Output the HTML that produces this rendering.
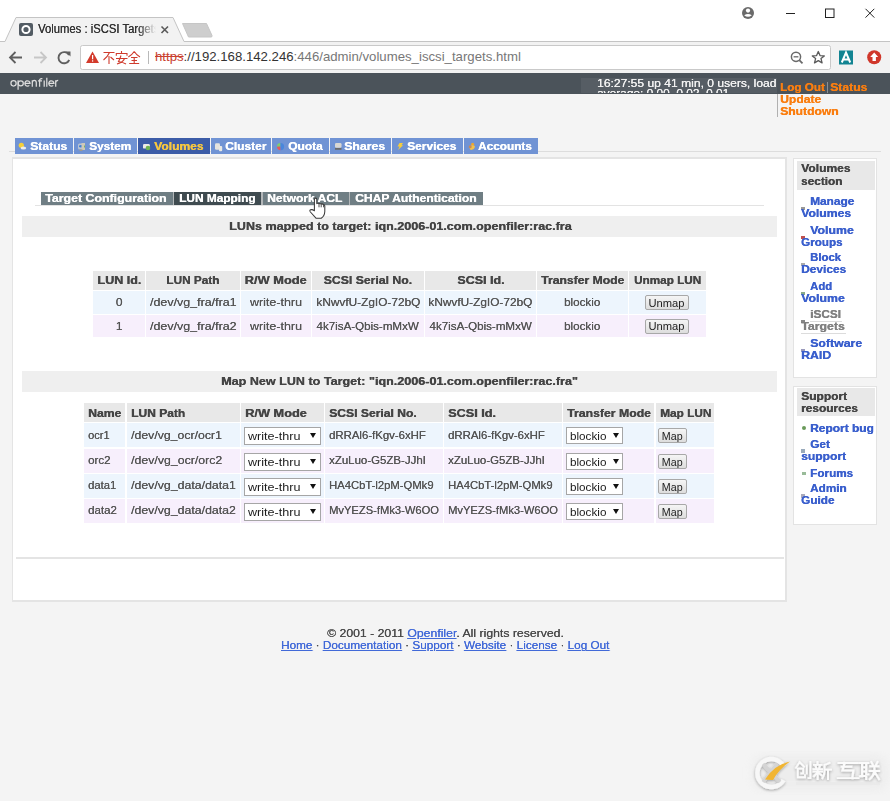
<!DOCTYPE html><html><head><meta charset="utf-8"><style>
*{margin:0;padding:0;box-sizing:border-box}
html,body{width:890px;height:801px;overflow:hidden;background:#f4f4f4;font-family:"Liberation Sans",sans-serif;font-size:11px;color:#444;position:relative}
div,span,svg{position:absolute}
.t{white-space:nowrap;line-height:14px}
.tab{top:138px;height:16px;background:#7093d4}
.tab.act{background:#3c5ca7}
.st{top:192px;height:13px;background:#6f7e84}
.st.act{background:#3f4b50}
.hb{left:22px;width:755px;background:#efefef;height:21px}
.hd{background:#e8e8e8}
.r1{background:#edf5fd}
.r2{background:#f7effc}
.sel{background:#fff;border:1px solid #a6a6a6}
.btn{background:linear-gradient(#f5f5f5,#dddddd);border:1px solid #a8a8a8;border-radius:2px}
.sb{background:#fff;border:1px solid #e3e3e3}
.sh{background:#e8e8e8}
.fl{color:#4169d8;text-decoration:underline}
</style></head><body>
<div style="left:0;top:0;width:890px;height:41px;background:#fff"></div>
<div style="left:0;top:41px;width:890px;height:32px;background:#f2f2f2"></div>
<svg style="left:0;top:0" width="890" height="74">
    <path d="M0 41.5 H5 L16 17.5 H173 L184 41.5 H890" fill="#f2f2f2" stroke="#c4c4c4" stroke-width="1"/>
    <rect x="80.5" y="45.5" width="750" height="24" rx="2" fill="#fff" stroke="#c9c9c9"/>
    <path d="M182.5 23.5 H206.5 L212 35.5 Q212.5 37 211 37 H188.5 Z" fill="#cecece" stroke="#c6c6c6"/>
    <rect x="19" y="23" width="14" height="13" rx="2" fill="#525b63"/>
    <circle cx="26" cy="29.5" r="3.6" fill="none" stroke="#fff" stroke-width="2"/>
    <path d="M161.5 26.5 L168 33 M168 26.5 L161.5 33" stroke="#5a5a5a" stroke-width="1.6"/>
    <path d="M22 57.5 H10 M15.5 52 L10 57.5 L15.5 63" fill="none" stroke="#5f5f5f" stroke-width="1.8"/>
    <path d="M46 57.5 H34 M40.5 52 L46 57.5 L40.5 63" fill="none" stroke="#c7c7c7" stroke-width="1.8"/>
    <path d="M69 55 A5.6 5.6 0 1 0 69.2 60" fill="none" stroke="#5f5f5f" stroke-width="1.9"/>
    <path d="M65.5 51.5 L70.5 51.5 L70.5 56.5 Z" fill="#5f5f5f"/>
    <path d="M92.5 51.5 L99 63 H86 Z" fill="#d33b2c"/>
    <rect x="92" y="55" width="1.2" height="4.3" fill="#fff"/><rect x="92" y="60.3" width="1.2" height="1.3" fill="#fff"/>
    <rect x="148" y="51" width="1" height="13" fill="#b9b9b9"/>
    <circle cx="796" cy="56.8" r="4.6" fill="none" stroke="#6a6a6a" stroke-width="1.5"/>
    <path d="M799.3 60.2 L802.5 63.4" stroke="#6a6a6a" stroke-width="1.8"/>
    <path d="M793.6 56.8 H798.4" stroke="#6a6a6a" stroke-width="1.3"/>
    <path d="M818.3 51.5 L820 55.6 L824.3 55.9 L821 58.6 L822.1 62.9 L818.3 60.6 L814.5 62.9 L815.6 58.6 L812.3 55.9 L816.6 55.6 Z" fill="none" stroke="#5a5a5a" stroke-width="1.3" stroke-linejoin="round"/>
    <rect x="839" y="50.5" width="14" height="14" fill="#128492"/>
    <path d="M841.8 62.5 L846 52.5 L850.2 62.5 M843.4 59.4 H848.6" fill="none" stroke="#fff" stroke-width="2"/>
    <circle cx="874.2" cy="57.3" r="7" fill="#d0372a"/>
    <path d="M874.2 52.5 L878.2 57 H875.9 V61 H872.5 V57 H870.2 Z" fill="#fff"/>
    <circle cx="748" cy="13" r="6" fill="#6a6a6a"/>
    <circle cx="748" cy="10.6" r="2.1" fill="#fff"/>
    <path d="M744.2 15.3 Q748 12.6 751.8 15.3 Q748 18.4 744.2 15.3 Z" fill="#fff"/>
    <rect x="786" y="13" width="9" height="1" fill="#222"/>
    <rect x="825.5" y="9" width="8.5" height="8.5" fill="none" stroke="#222" stroke-width="1"/>
    <path d="M865.5 8.8 L874.3 17.6 M874.3 8.8 L865.5 17.6" stroke="#222" stroke-width="1"/>
    </svg>
<div style="left:38px;top:18px;width:118px;height:20px;overflow:hidden;-webkit-mask-image:linear-gradient(90deg,#000 84%,transparent 100%)"><div class="t" style="left:0px;top:3.94px;color:#333;line-height:14px;text-shadow:0.15px 0 0 currentColor;"><span style="position:static;display:inline-block;white-space:pre;font-size:12px;transform:scaleX(0.9398);transform-origin:0 50%">Volumes : iSCSI Targets</span></div></div>
<svg style="left:103px;top:51px" width="40" height="14"><g fill="none" stroke="#cf3b2d" stroke-width="1.1">
    <path d="M0.5 1.5 H11.5 M6.5 1.5 Q4.5 6 0.5 9 M6 5 V13 M7.5 6 L11 9"/>
    <path transform="translate(12.5,0)" d="M6 0 V2 M0.8 4.8 V2.5 H11.5 V4.8 M0.5 7.5 H12 M5.5 4.5 Q4.5 8 3 10.5 Q8 11.5 10.5 13 M9 7.5 Q8 11 1.5 13"/>
    <path transform="translate(25,0)" d="M6.2 0.5 Q4 4 0.3 6 M6.2 0.5 Q8.5 4 12 6 M3 6.5 H9.5 M3.5 9.5 H9 M1.2 12.5 H11.2 M6.2 6.5 V12.5"/>
    </g></svg>
<div class="t" style="left:155px;top:49px;font-size:13.2px;line-height:16px;color:#777"><span style="position:static;color:#c9402f;text-decoration:line-through">https</span><span style="position:static;color:#333">://192.168.142.246</span>:446/admin/volumes_iscsi_targets.html</div>
<div style="left:0;top:73px;width:890px;height:20.5px;background:#4b535a"></div>
<svg style="left:0;top:74px" width="62" height="18"><g transform="translate(0,-74)" fill="none" stroke="#dcdcdc" stroke-width="1.25">
    <ellipse cx="13.55" cy="83.3" rx="2.6" ry="2.7"/>
    <path d="M18.1 80.2 V89.7"/><circle cx="20.75" cy="83.3" r="2.55"/>
    <path d="M24.9 83.3 H30 A2.55 2.65 0 1 0 29.3 85.3"/>
    <path d="M32.3 80.2 V86.7 M32.3 82.7 A2 2.3 0 0 1 36.3 82.7 V86.7"/>
    <path d="M39.6 86.7 V80.6 Q39.6 78.6 41.6 78.6 H42.4 M38 80.8 H42"/>
    <path d="M44.2 80.6 V86.7 M46.8 77.8 V86.7"/>
    <path d="M48.8 83.3 H53.9 A2.55 2.65 0 1 0 53.2 85.3"/>
    <path d="M55.7 80.2 V86.7 M55.7 82.8 A2.4 2.5 0 0 1 58.2 80.3"/>
    </g><circle cx="44.2" cy="78.8" r="0.75" fill="#dcdcdc"/></svg>
<div style="left:581px;top:78px;width:196px;height:15px;background:#565d64;overflow:hidden"><div class="t" style="left:16px;top:-1.81px;color:#f2f2f2;line-height:14px;text-shadow:0.15px 0 0 currentColor;"><span style="position:static;display:inline-block;white-space:pre;font-size:11px;transform:scaleX(1.0987);transform-origin:0 50%">16:27:55 up 41 min, 0 users, load</span></div><div class="t" style="left:16px;top:7.69px;color:#f2f2f2;line-height:14px;text-shadow:0.15px 0 0 currentColor;"><span style="position:static;display:inline-block;white-space:pre;font-size:11px;transform:scaleX(1.0800);transform-origin:0 50%">average: 0.00, 0.02, 0.01</span></div></div>
<div class="t" style="left:780px;top:79.99px;color:#fa7e10;line-height:14px;text-shadow:0.35px 0 0 currentColor;"><span style="position:static;display:inline-block;white-space:pre;font-size:11px;font-weight:bold;transform:scaleX(1.0603);transform-origin:0 50%">Log Out</span></div>
<div style="left:827px;top:82px;width:1px;height:11px;background:#8b8f93"></div>
<div class="t" style="left:829.8px;top:79.99px;color:#fa7e10;line-height:14px;text-shadow:0.35px 0 0 currentColor;"><span style="position:static;display:inline-block;white-space:pre;font-size:11px;font-weight:bold;transform:scaleX(1.1063);transform-origin:0 50%">Status</span></div>
<div class="t" style="left:780px;top:91.99px;color:#fa7e10;line-height:14px;text-shadow:0.35px 0 0 currentColor;"><span style="position:static;display:inline-block;white-space:pre;font-size:11px;font-weight:bold;transform:scaleX(1.1000);transform-origin:0 50%">Update</span></div>
<div class="t" style="left:780px;top:104.19px;color:#fa7e10;line-height:14px;text-shadow:0.35px 0 0 currentColor;"><span style="position:static;display:inline-block;white-space:pre;font-size:11px;font-weight:bold;transform:scaleX(1.1000);transform-origin:0 50%">Shutdown</span></div>
<div style="left:777px;top:94px;width:1px;height:23px;background:#b0b0b0"></div>
<div style="left:9px;top:151px;width:872px;height:1px;background:#dddddd"></div>
<div class="tab" style="left:15px;width:58px"></div>
<div class="t" style="left:29.5px;top:138.99px;color:#fff;line-height:14px;text-shadow:0.35px 0 0 currentColor;"><span style="position:static;display:inline-block;white-space:pre;font-size:11px;font-weight:bold;transform:scaleX(1.1033);transform-origin:0 50%">Status</span></div>
<div class="tab" style="left:74px;width:63px"></div>
<div class="t" style="left:88.5px;top:138.99px;color:#fff;line-height:14px;text-shadow:0.35px 0 0 currentColor;"><span style="position:static;display:inline-block;white-space:pre;font-size:11px;font-weight:bold;transform:scaleX(1.0756);transform-origin:0 50%">System</span></div>
<div class="tab act" style="left:138px;width:72px"></div>
<div class="t" style="left:153.6px;top:138.99px;color:#f6c740;line-height:14px;text-shadow:0.35px 0 0 currentColor;"><span style="position:static;display:inline-block;white-space:pre;font-size:11px;font-weight:bold;transform:scaleX(1.0970);transform-origin:0 50%">Volumes</span></div>
<div class="tab" style="left:211px;width:60px"></div>
<div class="t" style="left:224.5px;top:138.99px;color:#fff;line-height:14px;text-shadow:0.35px 0 0 currentColor;"><span style="position:static;display:inline-block;white-space:pre;font-size:11px;font-weight:bold;transform:scaleX(1.0895);transform-origin:0 50%">Cluster</span></div>
<div class="tab" style="left:272px;width:57px"></div>
<div class="t" style="left:287.6px;top:138.99px;color:#fff;line-height:14px;text-shadow:0.35px 0 0 currentColor;"><span style="position:static;display:inline-block;white-space:pre;font-size:11px;font-weight:bold;transform:scaleX(1.0887);transform-origin:0 50%">Quota</span></div>
<div class="tab" style="left:330px;width:61px"></div>
<div class="t" style="left:344.3px;top:138.99px;color:#fff;line-height:14px;text-shadow:0.35px 0 0 currentColor;"><span style="position:static;display:inline-block;white-space:pre;font-size:11px;font-weight:bold;transform:scaleX(1.1171);transform-origin:0 50%">Shares</span></div>
<div class="tab" style="left:392px;width:71px"></div>
<div class="t" style="left:406.5px;top:138.99px;color:#fff;line-height:14px;text-shadow:0.35px 0 0 currentColor;"><span style="position:static;display:inline-block;white-space:pre;font-size:11px;font-weight:bold;transform:scaleX(1.0869);transform-origin:0 50%">Services</span></div>
<div class="tab" style="left:464px;width:74px"></div>
<div class="t" style="left:477.8px;top:138.99px;color:#fff;line-height:14px;text-shadow:0.35px 0 0 currentColor;"><span style="position:static;display:inline-block;white-space:pre;font-size:11px;font-weight:bold;transform:scaleX(1.0713);transform-origin:0 50%">Accounts</span></div>
<svg style="left:0;top:136px" width="540" height="20">
    <g transform="translate(0,-136)">
    <circle cx="21.3" cy="145.3" r="2.6" fill="#f5cf3a"/>
    <ellipse cx="23.4" cy="148" rx="2.8" ry="1.6" fill="#ececec"/>
    <rect x="78" y="143.5" width="5.5" height="6" rx="1.5" fill="#b9c3d3"/><ellipse cx="81" cy="146.3" rx="2" ry="1.3" fill="#3d7fd6"/>
    <rect x="81.5" y="143" width="3.5" height="7" fill="#cfc8b8"/><rect x="84" y="145.5" width="1" height="2" fill="#7cb55a"/>
    <rect x="79.5" y="149.5" width="3" height="1.5" fill="#a29a8a"/>
    <rect x="143" y="144" width="6.8" height="4.6" rx="1.2" fill="#ecebe6"/><circle cx="148" cy="148" r="2.3" fill="#6fb54f"/>
    <rect x="215" y="143.2" width="5" height="6.5" rx="1.3" fill="#e4e3de"/><rect x="219" y="146" width="3.2" height="5.2" rx="1" fill="#e8e8e4"/>
    <path d="M280.5 146.6 L280.5 143 A3.6 3.6 0 0 0 277 146.8 Z" fill="#7fcd6e"/>
    <path d="M280.5 146.6 L277 146.8 A3.6 3.6 0 0 0 280.6 150.2 Z" fill="#e9575a"/>
    <path d="M280.5 146.6 L280.5 143 A3.6 3.6 0 0 1 280.6 150.2 Z" fill="#4a86dc"/>
    <rect x="335" y="143" width="6.5" height="4.8" rx="1.3" fill="#d9d7d2"/><rect x="335" y="148" width="6.5" height="1.8" fill="#6b6b6b"/>
    <path d="M399.5 143 H403 L401.5 145.3 H403.2 L398 150 L399.6 146.6 H397.5 Z" fill="#f6cd3c"/>
    <circle cx="472.6" cy="144.2" r="1.5" fill="#f0a62a"/><path d="M470 146 Q473.5 144.5 475 146.5 Q474.5 149.5 471 150 Q469 149 470 146 Z" fill="#f2c24b"/>
    <circle cx="470.2" cy="146.8" r="1.5" fill="#c98a5a"/>
    </g></svg>
<div style="left:12px;top:157px;width:775px;height:445px;background:#fff;border:1px solid #e4e4e4;border-width:2px 2px 2px 1px"></div>
<div style="left:35px;top:205px;width:729px;height:1px;background:#e3e3e3"></div>
<div style="left:41px;top:192px;width:442px;height:13px;background:#b3b7b9"></div>
<div class="st" style="left:41px;width:132px"></div>
<div class="t" style="left:45.4px;top:191.39px;color:#fff;line-height:14px;text-shadow:0.35px 0 0 currentColor;"><span style="position:static;display:inline-block;white-space:pre;font-size:11px;font-weight:bold;transform:scaleX(1.1244);transform-origin:0 50%">Target Configuration</span></div>
<div class="st act" style="left:174px;width:87px"></div>
<div class="t" style="left:179px;top:191.39px;color:#fff;line-height:14px;text-shadow:0.35px 0 0 currentColor;"><span style="position:static;display:inline-block;white-space:pre;font-size:11px;font-weight:bold;transform:scaleX(1.0777);transform-origin:0 50%">LUN Mapping</span></div>
<div class="st" style="left:263px;width:86px"></div>
<div class="t" style="left:267.4px;top:191.39px;color:#fff;line-height:14px;text-shadow:0.35px 0 0 currentColor;"><span style="position:static;display:inline-block;white-space:pre;font-size:11px;font-weight:bold;transform:scaleX(1.0953);transform-origin:0 50%">Network ACL</span></div>
<div class="st" style="left:350px;width:133px"></div>
<div class="t" style="left:355px;top:191.39px;color:#fff;line-height:14px;text-shadow:0.35px 0 0 currentColor;"><span style="position:static;display:inline-block;white-space:pre;font-size:11px;font-weight:bold;transform:scaleX(1.0983);transform-origin:0 50%">CHAP Authentication</span></div>
<div class="hb" style="top:216px"></div>
<div class="t" style="left:228.5px;top:218.99px;color:#444;line-height:14px;text-shadow:0.35px 0 0 currentColor;"><span style="position:static;display:inline-block;white-space:pre;font-size:11px;font-weight:bold;transform:scaleX(1.1411);transform-origin:0 50%">LUNs mapped to target: iqn.2006-01.com.openfiler:rac.fra</span></div>
<div class="hb" style="top:371px"></div>
<div class="t" style="left:220.7px;top:374.29px;color:#444;line-height:14px;text-shadow:0.35px 0 0 currentColor;"><span style="position:static;display:inline-block;white-space:pre;font-size:11px;font-weight:bold;transform:scaleX(1.1426);transform-origin:0 50%">Map New LUN to Target: "iqn.2006-01.com.openfiler:rac.fra"</span></div>
<div class="hd" style="left:93px;top:271px;width:52px;height:19px"></div>
<div class="hd" style="left:146px;top:271px;width:94px;height:19px"></div>
<div class="hd" style="left:241px;top:271px;width:70px;height:19px"></div>
<div class="hd" style="left:312px;top:271px;width:112px;height:19px"></div>
<div class="hd" style="left:425px;top:271px;width:111px;height:19px"></div>
<div class="hd" style="left:537px;top:271px;width:91px;height:19px"></div>
<div class="hd" style="left:629px;top:271px;width:77px;height:19px"></div>
<div class="r1" style="left:93px;top:291px;width:52px;height:23px"></div>
<div class="r1" style="left:146px;top:291px;width:94px;height:23px"></div>
<div class="r1" style="left:241px;top:291px;width:70px;height:23px"></div>
<div class="r1" style="left:312px;top:291px;width:112px;height:23px"></div>
<div class="r1" style="left:425px;top:291px;width:111px;height:23px"></div>
<div class="r1" style="left:537px;top:291px;width:91px;height:23px"></div>
<div class="r1" style="left:629px;top:291px;width:77px;height:23px"></div>
<div class="r2" style="left:93px;top:315px;width:52px;height:22px"></div>
<div class="r2" style="left:146px;top:315px;width:94px;height:22px"></div>
<div class="r2" style="left:241px;top:315px;width:70px;height:22px"></div>
<div class="r2" style="left:312px;top:315px;width:112px;height:22px"></div>
<div class="r2" style="left:425px;top:315px;width:111px;height:22px"></div>
<div class="r2" style="left:537px;top:315px;width:91px;height:22px"></div>
<div class="r2" style="left:629px;top:315px;width:77px;height:22px"></div>
<div class="t" style="left:93px;top:273.19px;width:52px;text-align:center;color:#454545;line-height:14px;text-shadow:0.35px 0 0 currentColor;"><span style="position:static;display:inline-block;white-space:pre;font-size:11px;font-weight:bold;transform:scaleX(1.1377);transform-origin:50% 50%">LUN Id.</span></div>
<div class="t" style="left:146px;top:273.19px;width:94px;text-align:center;color:#454545;line-height:14px;text-shadow:0.35px 0 0 currentColor;"><span style="position:static;display:inline-block;white-space:pre;font-size:11px;font-weight:bold;transform:scaleX(1.0707);transform-origin:50% 50%">LUN Path</span></div>
<div class="t" style="left:241px;top:273.19px;width:70px;text-align:center;color:#454545;line-height:14px;text-shadow:0.35px 0 0 currentColor;"><span style="position:static;display:inline-block;white-space:pre;font-size:11px;font-weight:bold;transform:scaleX(1.1660);transform-origin:50% 50%">R/W Mode</span></div>
<div class="t" style="left:312px;top:273.19px;width:112px;text-align:center;color:#454545;line-height:14px;text-shadow:0.35px 0 0 currentColor;"><span style="position:static;display:inline-block;white-space:pre;font-size:11px;font-weight:bold;transform:scaleX(1.1122);transform-origin:50% 50%">SCSI Serial No.</span></div>
<div class="t" style="left:425px;top:273.19px;width:111px;text-align:center;color:#454545;line-height:14px;text-shadow:0.35px 0 0 currentColor;"><span style="position:static;display:inline-block;white-space:pre;font-size:11px;font-weight:bold;transform:scaleX(1.1380);transform-origin:50% 50%">SCSI Id.</span></div>
<div class="t" style="left:537px;top:273.19px;width:91px;text-align:center;color:#454545;line-height:14px;text-shadow:0.35px 0 0 currentColor;"><span style="position:static;display:inline-block;white-space:pre;font-size:11px;font-weight:bold;transform:scaleX(1.1066);transform-origin:50% 50%">Transfer Mode</span></div>
<div class="t" style="left:629px;top:273.19px;width:77px;text-align:center;color:#454545;line-height:14px;text-shadow:0.35px 0 0 currentColor;"><span style="position:static;display:inline-block;white-space:pre;font-size:11px;font-weight:bold;transform:scaleX(1.0643);transform-origin:50% 50%">Unmap LUN</span></div>
<div class="t" style="left:93px;top:294.89px;width:52px;text-align:center;color:#555;line-height:14px;text-shadow:0.15px 0 0 currentColor;"><span style="position:static;display:inline-block;white-space:pre;font-size:11px;transform:scaleX(1.0800);transform-origin:50% 50%">0</span></div>
<div class="t" style="left:146px;top:294.89px;width:94px;text-align:center;color:#555;line-height:14px;text-shadow:0.15px 0 0 currentColor;"><span style="position:static;display:inline-block;white-space:pre;font-size:11px;transform:scaleX(1.1330);transform-origin:50% 50%">/dev/vg_fra/fra1</span></div>
<div class="t" style="left:241px;top:294.89px;width:70px;text-align:center;color:#555;line-height:14px;text-shadow:0.15px 0 0 currentColor;"><span style="position:static;display:inline-block;white-space:pre;font-size:11px;transform:scaleX(1.1343);transform-origin:50% 50%">write-thru</span></div>
<div class="t" style="left:312px;top:294.89px;width:112px;text-align:center;color:#555;line-height:14px;text-shadow:0.15px 0 0 currentColor;"><span style="position:static;display:inline-block;white-space:pre;font-size:11px;transform:scaleX(1.0768);transform-origin:50% 50%">kNwvfU-ZgIO-72bQ</span></div>
<div class="t" style="left:425px;top:294.89px;width:111px;text-align:center;color:#555;line-height:14px;text-shadow:0.15px 0 0 currentColor;"><span style="position:static;display:inline-block;white-space:pre;font-size:11px;transform:scaleX(1.0768);transform-origin:50% 50%">kNwvfU-ZgIO-72bQ</span></div>
<div class="t" style="left:537px;top:294.89px;width:91px;text-align:center;color:#555;line-height:14px;text-shadow:0.15px 0 0 currentColor;"><span style="position:static;display:inline-block;white-space:pre;font-size:11px;transform:scaleX(1.0599);transform-origin:50% 50%">blockio</span></div>
<div class="btn" style="left:645px;top:295px;width:44px;height:15px"></div>
<div class="t" style="left:645px;top:295.52px;width:44px;text-align:center;color:#222;line-height:14px;text-shadow:0.15px 0 0 currentColor;text-shadow:none"><span style="position:static;display:inline-block;white-space:pre;font-size:11.5px;transform:scaleX(0.9709);transform-origin:50% 50%">Unmap</span></div>
<div class="t" style="left:93px;top:318.59px;width:52px;text-align:center;color:#555;line-height:14px;text-shadow:0.15px 0 0 currentColor;"><span style="position:static;display:inline-block;white-space:pre;font-size:11px;transform:scaleX(1.0800);transform-origin:50% 50%">1</span></div>
<div class="t" style="left:146px;top:318.59px;width:94px;text-align:center;color:#555;line-height:14px;text-shadow:0.15px 0 0 currentColor;"><span style="position:static;display:inline-block;white-space:pre;font-size:11px;transform:scaleX(1.1330);transform-origin:50% 50%">/dev/vg_fra/fra2</span></div>
<div class="t" style="left:241px;top:318.59px;width:70px;text-align:center;color:#555;line-height:14px;text-shadow:0.15px 0 0 currentColor;"><span style="position:static;display:inline-block;white-space:pre;font-size:11px;transform:scaleX(1.1343);transform-origin:50% 50%">write-thru</span></div>
<div class="t" style="left:312px;top:318.59px;width:112px;text-align:center;color:#555;line-height:14px;text-shadow:0.15px 0 0 currentColor;"><span style="position:static;display:inline-block;white-space:pre;font-size:11px;transform:scaleX(1.0528);transform-origin:50% 50%">4k7isA-Qbis-mMxW</span></div>
<div class="t" style="left:425px;top:318.59px;width:111px;text-align:center;color:#555;line-height:14px;text-shadow:0.15px 0 0 currentColor;"><span style="position:static;display:inline-block;white-space:pre;font-size:11px;transform:scaleX(1.0528);transform-origin:50% 50%">4k7isA-Qbis-mMxW</span></div>
<div class="t" style="left:537px;top:318.59px;width:91px;text-align:center;color:#555;line-height:14px;text-shadow:0.15px 0 0 currentColor;"><span style="position:static;display:inline-block;white-space:pre;font-size:11px;transform:scaleX(1.0599);transform-origin:50% 50%">blockio</span></div>
<div class="btn" style="left:645px;top:319px;width:44px;height:15px"></div>
<div class="t" style="left:645px;top:319.22px;width:44px;text-align:center;color:#222;line-height:14px;text-shadow:0.15px 0 0 currentColor;text-shadow:none"><span style="position:static;display:inline-block;white-space:pre;font-size:11.5px;transform:scaleX(0.9709);transform-origin:50% 50%">Unmap</span></div>
<div class="hd" style="left:84px;top:403px;width:41px;height:19px"></div>
<div class="hd" style="left:127px;top:403px;width:113px;height:19px"></div>
<div class="hd" style="left:241px;top:403px;width:83px;height:19px"></div>
<div class="hd" style="left:325px;top:403px;width:118px;height:19px"></div>
<div class="hd" style="left:444px;top:403px;width:118px;height:19px"></div>
<div class="hd" style="left:563px;top:403px;width:91px;height:19px"></div>
<div class="hd" style="left:656px;top:403px;width:58px;height:19px"></div>
<div class="r1" style="left:84px;top:423px;width:41px;height:24px"></div>
<div class="r1" style="left:127px;top:423px;width:113px;height:24px"></div>
<div class="r1" style="left:241px;top:423px;width:83px;height:24px"></div>
<div class="r1" style="left:325px;top:423px;width:118px;height:24px"></div>
<div class="r1" style="left:444px;top:423px;width:118px;height:24px"></div>
<div class="r1" style="left:563px;top:423px;width:91px;height:24px"></div>
<div class="r1" style="left:656px;top:423px;width:58px;height:24px"></div>
<div class="r2" style="left:84px;top:449px;width:41px;height:24px"></div>
<div class="r2" style="left:127px;top:449px;width:113px;height:24px"></div>
<div class="r2" style="left:241px;top:449px;width:83px;height:24px"></div>
<div class="r2" style="left:325px;top:449px;width:118px;height:24px"></div>
<div class="r2" style="left:444px;top:449px;width:118px;height:24px"></div>
<div class="r2" style="left:563px;top:449px;width:91px;height:24px"></div>
<div class="r2" style="left:656px;top:449px;width:58px;height:24px"></div>
<div class="r1" style="left:84px;top:474px;width:41px;height:24px"></div>
<div class="r1" style="left:127px;top:474px;width:113px;height:24px"></div>
<div class="r1" style="left:241px;top:474px;width:83px;height:24px"></div>
<div class="r1" style="left:325px;top:474px;width:118px;height:24px"></div>
<div class="r1" style="left:444px;top:474px;width:118px;height:24px"></div>
<div class="r1" style="left:563px;top:474px;width:91px;height:24px"></div>
<div class="r1" style="left:656px;top:474px;width:58px;height:24px"></div>
<div class="r2" style="left:84px;top:499px;width:41px;height:24px"></div>
<div class="r2" style="left:127px;top:499px;width:113px;height:24px"></div>
<div class="r2" style="left:241px;top:499px;width:83px;height:24px"></div>
<div class="r2" style="left:325px;top:499px;width:118px;height:24px"></div>
<div class="r2" style="left:444px;top:499px;width:118px;height:24px"></div>
<div class="r2" style="left:563px;top:499px;width:91px;height:24px"></div>
<div class="r2" style="left:656px;top:499px;width:58px;height:24px"></div>
<div class="t" style="left:88px;top:405.79px;color:#454545;line-height:14px;text-shadow:0.35px 0 0 currentColor;"><span style="position:static;display:inline-block;white-space:pre;font-size:11px;font-weight:bold;transform:scaleX(1.1078);transform-origin:0 50%">Name</span></div>
<div class="t" style="left:131px;top:405.79px;color:#454545;line-height:14px;text-shadow:0.35px 0 0 currentColor;"><span style="position:static;display:inline-block;white-space:pre;font-size:11px;font-weight:bold;transform:scaleX(1.0909);transform-origin:0 50%">LUN Path</span></div>
<div class="t" style="left:245px;top:405.79px;color:#454545;line-height:14px;text-shadow:0.35px 0 0 currentColor;"><span style="position:static;display:inline-block;white-space:pre;font-size:11px;font-weight:bold;transform:scaleX(1.1604);transform-origin:0 50%">R/W Mode</span></div>
<div class="t" style="left:329px;top:405.79px;color:#454545;line-height:14px;text-shadow:0.35px 0 0 currentColor;"><span style="position:static;display:inline-block;white-space:pre;font-size:11px;font-weight:bold;transform:scaleX(1.1021);transform-origin:0 50%">SCSI Serial No.</span></div>
<div class="t" style="left:448px;top:405.79px;color:#454545;line-height:14px;text-shadow:0.35px 0 0 currentColor;"><span style="position:static;display:inline-block;white-space:pre;font-size:11px;font-weight:bold;transform:scaleX(1.1501);transform-origin:0 50%">SCSI Id.</span></div>
<div class="t" style="left:567px;top:405.79px;color:#454545;line-height:14px;text-shadow:0.35px 0 0 currentColor;"><span style="position:static;display:inline-block;white-space:pre;font-size:11px;font-weight:bold;transform:scaleX(1.1145);transform-origin:0 50%">Transfer Mode</span></div>
<div class="t" style="left:660px;top:405.79px;color:#454545;line-height:14px;text-shadow:0.35px 0 0 currentColor;"><span style="position:static;display:inline-block;white-space:pre;font-size:11px;font-weight:bold;transform:scaleX(1.0761);transform-origin:0 50%">Map LUN</span></div>
<div class="t" style="left:88px;top:428.19px;color:#555;line-height:14px;text-shadow:0.15px 0 0 currentColor;"><span style="position:static;display:inline-block;white-space:pre;font-size:11px;transform:scaleX(1.0091);transform-origin:0 50%">ocr1</span></div>
<div class="t" style="left:131px;top:428.19px;color:#555;line-height:14px;text-shadow:0.15px 0 0 currentColor;"><span style="position:static;display:inline-block;white-space:pre;font-size:11px;transform:scaleX(1.1165);transform-origin:0 50%">/dev/vg_ocr/ocr1</span></div>
<div class="sel" style="left:244px;top:427px;width:77px;height:18px"></div>
<div class="t" style="left:248px;top:429.02px;color:#1a1a1a;line-height:14px;text-shadow:0.15px 0 0 currentColor;text-shadow:none"><span style="position:static;display:inline-block;white-space:pre;font-size:11.5px;transform:scaleX(1.0952);transform-origin:0 50%">write-thru</span></div>
<svg style="left:309.5px;top:433px" width="6" height="5"><path d="M0 0H6L3 5Z" fill="#111"/></svg>
<div class="t" style="left:329px;top:428.19px;color:#555;line-height:14px;text-shadow:0.15px 0 0 currentColor;"><span style="position:static;display:inline-block;white-space:pre;font-size:11px;transform:scaleX(1.0349);transform-origin:0 50%">dRRAl6-fKgv-6xHF</span></div>
<div class="t" style="left:448px;top:428.19px;color:#555;line-height:14px;text-shadow:0.15px 0 0 currentColor;"><span style="position:static;display:inline-block;white-space:pre;font-size:11px;transform:scaleX(1.0349);transform-origin:0 50%">dRRAl6-fKgv-6xHF</span></div>
<div class="sel" style="left:566px;top:427px;width:57px;height:17px"></div>
<div class="t" style="left:570px;top:429.02px;color:#1a1a1a;line-height:14px;text-shadow:0.15px 0 0 currentColor;text-shadow:none"><span style="position:static;display:inline-block;white-space:pre;font-size:11.5px;transform:scaleX(1.0164);transform-origin:0 50%">blockio</span></div>
<svg style="left:612.5px;top:433px" width="6" height="5"><path d="M0 0H6L3 5Z" fill="#111"/></svg>
<div class="btn" style="left:658px;top:428px;width:29px;height:15px"></div>
<div class="t" style="left:658px;top:429.02px;width:29px;text-align:center;color:#222;line-height:14px;text-shadow:0.15px 0 0 currentColor;text-shadow:none"><span style="position:static;display:inline-block;white-space:pre;font-size:11.5px;transform:scaleX(0.9296);transform-origin:50% 50%">Map</span></div>
<div class="t" style="left:88px;top:452.99px;color:#555;line-height:14px;text-shadow:0.15px 0 0 currentColor;"><span style="position:static;display:inline-block;white-space:pre;font-size:11px;transform:scaleX(1.0511);transform-origin:0 50%">orc2</span></div>
<div class="t" style="left:131px;top:452.99px;color:#555;line-height:14px;text-shadow:0.15px 0 0 currentColor;"><span style="position:static;display:inline-block;white-space:pre;font-size:11px;transform:scaleX(1.1214);transform-origin:0 50%">/dev/vg_ocr/orc2</span></div>
<div class="sel" style="left:244px;top:453px;width:77px;height:18px"></div>
<div class="t" style="left:248px;top:455.02px;color:#1a1a1a;line-height:14px;text-shadow:0.15px 0 0 currentColor;text-shadow:none"><span style="position:static;display:inline-block;white-space:pre;font-size:11.5px;transform:scaleX(1.0952);transform-origin:0 50%">write-thru</span></div>
<svg style="left:309.5px;top:459px" width="6" height="5"><path d="M0 0H6L3 5Z" fill="#111"/></svg>
<div class="t" style="left:329px;top:452.99px;color:#555;line-height:14px;text-shadow:0.15px 0 0 currentColor;"><span style="position:static;display:inline-block;white-space:pre;font-size:11px;transform:scaleX(1.0417);transform-origin:0 50%">xZuLuo-G5ZB-JJhI</span></div>
<div class="t" style="left:448px;top:452.99px;color:#555;line-height:14px;text-shadow:0.15px 0 0 currentColor;"><span style="position:static;display:inline-block;white-space:pre;font-size:11px;transform:scaleX(1.0417);transform-origin:0 50%">xZuLuo-G5ZB-JJhI</span></div>
<div class="sel" style="left:566px;top:453px;width:57px;height:17px"></div>
<div class="t" style="left:570px;top:455.02px;color:#1a1a1a;line-height:14px;text-shadow:0.15px 0 0 currentColor;text-shadow:none"><span style="position:static;display:inline-block;white-space:pre;font-size:11.5px;transform:scaleX(1.0164);transform-origin:0 50%">blockio</span></div>
<svg style="left:612.5px;top:459px" width="6" height="5"><path d="M0 0H6L3 5Z" fill="#111"/></svg>
<div class="btn" style="left:658px;top:454px;width:29px;height:15px"></div>
<div class="t" style="left:658px;top:455.02px;width:29px;text-align:center;color:#222;line-height:14px;text-shadow:0.15px 0 0 currentColor;text-shadow:none"><span style="position:static;display:inline-block;white-space:pre;font-size:11.5px;transform:scaleX(0.9296);transform-origin:50% 50%">Map</span></div>
<div class="t" style="left:88px;top:478.19px;color:#555;line-height:14px;text-shadow:0.15px 0 0 currentColor;"><span style="position:static;display:inline-block;white-space:pre;font-size:11px;transform:scaleX(1.0243);transform-origin:0 50%">data1</span></div>
<div class="t" style="left:131px;top:478.19px;color:#555;line-height:14px;text-shadow:0.15px 0 0 currentColor;"><span style="position:static;display:inline-block;white-space:pre;font-size:11px;transform:scaleX(1.1199);transform-origin:0 50%">/dev/vg_data/data1</span></div>
<div class="sel" style="left:244px;top:478px;width:77px;height:18px"></div>
<div class="t" style="left:248px;top:480.02px;color:#1a1a1a;line-height:14px;text-shadow:0.15px 0 0 currentColor;text-shadow:none"><span style="position:static;display:inline-block;white-space:pre;font-size:11.5px;transform:scaleX(1.0952);transform-origin:0 50%">write-thru</span></div>
<svg style="left:309.5px;top:484px" width="6" height="5"><path d="M0 0H6L3 5Z" fill="#111"/></svg>
<div class="t" style="left:329px;top:478.19px;color:#555;line-height:14px;text-shadow:0.15px 0 0 currentColor;"><span style="position:static;display:inline-block;white-space:pre;font-size:11px;transform:scaleX(1.0237);transform-origin:0 50%">HA4CbT-l2pM-QMk9</span></div>
<div class="t" style="left:448px;top:478.19px;color:#555;line-height:14px;text-shadow:0.15px 0 0 currentColor;"><span style="position:static;display:inline-block;white-space:pre;font-size:11px;transform:scaleX(1.0237);transform-origin:0 50%">HA4CbT-l2pM-QMk9</span></div>
<div class="sel" style="left:566px;top:478px;width:57px;height:17px"></div>
<div class="t" style="left:570px;top:480.02px;color:#1a1a1a;line-height:14px;text-shadow:0.15px 0 0 currentColor;text-shadow:none"><span style="position:static;display:inline-block;white-space:pre;font-size:11.5px;transform:scaleX(1.0164);transform-origin:0 50%">blockio</span></div>
<svg style="left:612.5px;top:484px" width="6" height="5"><path d="M0 0H6L3 5Z" fill="#111"/></svg>
<div class="btn" style="left:658px;top:479px;width:29px;height:15px"></div>
<div class="t" style="left:658px;top:480.02px;width:29px;text-align:center;color:#222;line-height:14px;text-shadow:0.15px 0 0 currentColor;text-shadow:none"><span style="position:static;display:inline-block;white-space:pre;font-size:11.5px;transform:scaleX(0.9296);transform-origin:50% 50%">Map</span></div>
<div class="t" style="left:88px;top:502.69px;color:#555;line-height:14px;text-shadow:0.15px 0 0 currentColor;"><span style="position:static;display:inline-block;white-space:pre;font-size:11px;transform:scaleX(1.0461);transform-origin:0 50%">data2</span></div>
<div class="t" style="left:131px;top:502.69px;color:#555;line-height:14px;text-shadow:0.15px 0 0 currentColor;"><span style="position:static;display:inline-block;white-space:pre;font-size:11px;transform:scaleX(1.1199);transform-origin:0 50%">/dev/vg_data/data2</span></div>
<div class="sel" style="left:244px;top:503px;width:77px;height:18px"></div>
<div class="t" style="left:248px;top:505.02px;color:#1a1a1a;line-height:14px;text-shadow:0.15px 0 0 currentColor;text-shadow:none"><span style="position:static;display:inline-block;white-space:pre;font-size:11.5px;transform:scaleX(1.0952);transform-origin:0 50%">write-thru</span></div>
<svg style="left:309.5px;top:509px" width="6" height="5"><path d="M0 0H6L3 5Z" fill="#111"/></svg>
<div class="t" style="left:329px;top:502.69px;color:#555;line-height:14px;text-shadow:0.15px 0 0 currentColor;"><span style="position:static;display:inline-block;white-space:pre;font-size:11px;transform:scaleX(1.0160);transform-origin:0 50%">MvYEZS-fMk3-W6OO</span></div>
<div class="t" style="left:448px;top:502.69px;color:#555;line-height:14px;text-shadow:0.15px 0 0 currentColor;"><span style="position:static;display:inline-block;white-space:pre;font-size:11px;transform:scaleX(1.0160);transform-origin:0 50%">MvYEZS-fMk3-W6OO</span></div>
<div class="sel" style="left:566px;top:503px;width:57px;height:17px"></div>
<div class="t" style="left:570px;top:505.02px;color:#1a1a1a;line-height:14px;text-shadow:0.15px 0 0 currentColor;text-shadow:none"><span style="position:static;display:inline-block;white-space:pre;font-size:11.5px;transform:scaleX(1.0164);transform-origin:0 50%">blockio</span></div>
<svg style="left:612.5px;top:509px" width="6" height="5"><path d="M0 0H6L3 5Z" fill="#111"/></svg>
<div class="btn" style="left:658px;top:504px;width:29px;height:15px"></div>
<div class="t" style="left:658px;top:505.02px;width:29px;text-align:center;color:#222;line-height:14px;text-shadow:0.15px 0 0 currentColor;text-shadow:none"><span style="position:static;display:inline-block;white-space:pre;font-size:11.5px;transform:scaleX(0.9296);transform-origin:50% 50%">Map</span></div>
<div style="left:16px;top:557px;width:768px;height:2px;background:#e4e4e4"></div>
<div class="sb" style="left:793px;top:158px;width:84px;height:220px"></div>
<div class="sh" style="left:797px;top:161px;width:78px;height:29px"></div>
<div class="t" style="left:801px;top:161.39px;color:#444;line-height:14px;text-shadow:0.35px 0 0 currentColor;"><span style="position:static;display:inline-block;white-space:pre;font-size:11px;font-weight:bold;transform:scaleX(1.0970);transform-origin:0 50%">Volumes</span></div>
<div class="t" style="left:801px;top:173.79px;color:#444;line-height:14px;text-shadow:0.35px 0 0 currentColor;"><span style="position:static;display:inline-block;white-space:pre;font-size:11px;font-weight:bold;transform:scaleX(1.0697);transform-origin:0 50%">section</span></div>
<div style="left:801px;top:206.7px;width:4px;height:3px;background:#999"></div>
<div class="t" style="left:810px;top:193.89px;color:#3a5fcd;line-height:14px;text-shadow:0.35px 0 0 currentColor;"><span style="position:static;display:inline-block;white-space:pre;font-size:11px;font-weight:bold;transform:scaleX(1.0764);transform-origin:0 50%">Manage</span></div>
<div class="t" style="left:801px;top:205.89px;color:#3a5fcd;line-height:14px;text-shadow:0.35px 0 0 currentColor;"><span style="position:static;display:inline-block;white-space:pre;font-size:11px;font-weight:bold;transform:scaleX(1.1103);transform-origin:0 50%">Volumes</span></div>
<div style="left:801px;top:235.6px;width:4px;height:3px;background:#c0504d"></div>
<div class="t" style="left:810px;top:222.79px;color:#3a5fcd;line-height:14px;text-shadow:0.35px 0 0 currentColor;"><span style="position:static;display:inline-block;white-space:pre;font-size:11px;font-weight:bold;transform:scaleX(1.1202);transform-origin:0 50%">Volume</span></div>
<div class="t" style="left:801px;top:234.79px;color:#3a5fcd;line-height:14px;text-shadow:0.35px 0 0 currentColor;"><span style="position:static;display:inline-block;white-space:pre;font-size:11px;font-weight:bold;transform:scaleX(1.0581);transform-origin:0 50%">Groups</span></div>
<div style="left:801px;top:263.2px;width:4px;height:3px;background:#aaa"></div>
<div class="t" style="left:810px;top:250.39px;color:#3a5fcd;line-height:14px;text-shadow:0.35px 0 0 currentColor;"><span style="position:static;display:inline-block;white-space:pre;font-size:11px;font-weight:bold;transform:scaleX(1.0311);transform-origin:0 50%">Block</span></div>
<div class="t" style="left:801px;top:262.39px;color:#3a5fcd;line-height:14px;text-shadow:0.35px 0 0 currentColor;"><span style="position:static;display:inline-block;white-space:pre;font-size:11px;font-weight:bold;transform:scaleX(1.0819);transform-origin:0 50%">Devices</span></div>
<div style="left:801px;top:291.7px;width:4px;height:3px;background:#8a8"></div>
<div class="t" style="left:810px;top:278.89px;color:#3a5fcd;line-height:14px;text-shadow:0.35px 0 0 currentColor;"><span style="position:static;display:inline-block;white-space:pre;font-size:11px;font-weight:bold;transform:scaleX(1.0285);transform-origin:0 50%">Add</span></div>
<div class="t" style="left:801px;top:290.89px;color:#3a5fcd;line-height:14px;text-shadow:0.35px 0 0 currentColor;"><span style="position:static;display:inline-block;white-space:pre;font-size:11px;font-weight:bold;transform:scaleX(1.1228);transform-origin:0 50%">Volume</span></div>
<div style="left:801px;top:319.5px;width:4px;height:3px;background:#888"></div>
<div class="t" style="left:810px;top:306.69px;color:#808080;line-height:14px;text-shadow:0.35px 0 0 currentColor;"><span style="position:static;display:inline-block;white-space:pre;font-size:11px;font-weight:bold;transform:scaleX(1.0754);transform-origin:0 50%">iSCSI</span></div>
<div class="t" style="left:801px;top:318.69px;color:#808080;line-height:14px;text-shadow:0.35px 0 0 currentColor;"><span style="position:static;display:inline-block;white-space:pre;font-size:11px;font-weight:bold;transform:scaleX(1.1228);transform-origin:0 50%">Targets</span></div>
<div style="left:801px;top:348.5px;width:4px;height:3px;background:#99b"></div>
<div class="t" style="left:810px;top:335.69px;color:#3a5fcd;line-height:14px;text-shadow:0.35px 0 0 currentColor;"><span style="position:static;display:inline-block;white-space:pre;font-size:11px;font-weight:bold;transform:scaleX(1.1190);transform-origin:0 50%">Software</span></div>
<div class="t" style="left:801px;top:347.69px;color:#3a5fcd;line-height:14px;text-shadow:0.35px 0 0 currentColor;"><span style="position:static;display:inline-block;white-space:pre;font-size:11px;font-weight:bold;transform:scaleX(1.1156);transform-origin:0 50%">RAID</span></div>
<div style="left:810px;top:321px;width:32px;height:1px;background:#dcdcdc"></div>
<div style="left:801px;top:333px;width:45px;height:1px;background:#dcdcdc"></div>
<div class="sb" style="left:793px;top:386px;width:84px;height:139px"></div>
<div class="sh" style="left:797px;top:388px;width:78px;height:28px"></div>
<div class="t" style="left:801px;top:388.89px;color:#444;line-height:14px;text-shadow:0.35px 0 0 currentColor;"><span style="position:static;display:inline-block;white-space:pre;font-size:11px;font-weight:bold;transform:scaleX(1.0908);transform-origin:0 50%">Support</span></div>
<div class="t" style="left:801px;top:401.09px;color:#444;line-height:14px;text-shadow:0.35px 0 0 currentColor;"><span style="position:static;display:inline-block;white-space:pre;font-size:11px;font-weight:bold;transform:scaleX(1.0800);transform-origin:0 50%">resources</span></div>
<div style="left:802px;top:426px;width:4px;height:4px;border-radius:2px;background:#6a9a5a"></div>
<div class="t" style="left:810px;top:420.69px;color:#3a5fcd;line-height:14px;text-shadow:0.35px 0 0 currentColor;"><span style="position:static;display:inline-block;white-space:pre;font-size:11px;font-weight:bold;transform:scaleX(1.0857);transform-origin:0 50%">Report bug</span></div>
<div style="left:801px;top:449px;width:4px;height:4px;background:#9ab"></div>
<div class="t" style="left:810px;top:436.69px;color:#3a5fcd;line-height:14px;text-shadow:0.35px 0 0 currentColor;"><span style="position:static;display:inline-block;white-space:pre;font-size:11px;font-weight:bold;transform:scaleX(1.0739);transform-origin:0 50%">Get</span></div>
<div class="t" style="left:801px;top:448.79px;color:#3a5fcd;line-height:14px;text-shadow:0.35px 0 0 currentColor;"><span style="position:static;display:inline-block;white-space:pre;font-size:11px;font-weight:bold;transform:scaleX(1.0988);transform-origin:0 50%">support</span></div>
<div style="left:802px;top:472px;width:4px;height:3px;background:#9b9"></div>
<div class="t" style="left:810px;top:465.69px;color:#3a5fcd;line-height:14px;text-shadow:0.35px 0 0 currentColor;"><span style="position:static;display:inline-block;white-space:pre;font-size:11px;font-weight:bold;transform:scaleX(1.0658);transform-origin:0 50%">Forums</span></div>
<div style="left:801px;top:494px;width:4px;height:4px;background:#aab"></div>
<div class="t" style="left:810px;top:481.19px;color:#3a5fcd;line-height:14px;text-shadow:0.35px 0 0 currentColor;"><span style="position:static;display:inline-block;white-space:pre;font-size:11px;font-weight:bold;transform:scaleX(1.0662);transform-origin:0 50%">Admin</span></div>
<div class="t" style="left:801px;top:492.89px;color:#3a5fcd;line-height:14px;text-shadow:0.35px 0 0 currentColor;"><span style="position:static;display:inline-block;white-space:pre;font-size:11px;font-weight:bold;transform:scaleX(1.0683);transform-origin:0 50%">Guide</span></div>
<div class="t" style="left:326.6px;top:626.39px;color:#4a4a4a;line-height:14px;text-shadow:0.15px 0 0 currentColor;"><span style="position:static;display:inline-block;white-space:pre;font-size:11px;transform:scaleX(1.1130);transform-origin:0 50%">© 2001 - 2011 <span class="fl" style="position:static">Openfiler</span>. All rights reserved.</span></div>
<div class="t" style="left:281.1px;top:638.49px;color:#4a4a4a;line-height:14px;text-shadow:0.15px 0 0 currentColor;"><span style="position:static;display:inline-block;white-space:pre;font-size:11px;transform:scaleX(1.0683);transform-origin:0 50%"><span class="fl" style="position:static">Home</span> · <span class="fl" style="position:static">Documentation</span> · <span class="fl" style="position:static">Support</span> · <span class="fl" style="position:static">Website</span> · <span class="fl" style="position:static">License</span> · <span class="fl" style="position:static">Log Out</span></span></div>
<svg style="left:740px;top:745px" width="150" height="50">
    <defs><filter id="ds" x="-30%" y="-30%" width="160%" height="160%"><feGaussianBlur in="SourceAlpha" stdDeviation="1.6"/><feOffset dx="0" dy="0.5"/><feComponentTransfer><feFuncA type="linear" slope="0.35"/></feComponentTransfer><feMerge><feMergeNode/><feMergeNode in="SourceGraphic"/></feMerge></filter>
    <filter id="bg"><feGaussianBlur stdDeviation="4"/></filter></defs>
    <rect x="12" y="10" width="136" height="36" rx="12" fill="#e9e9e9" opacity="0.55" filter="url(#bg)"/>
    <g filter="url(#ds)">
    <path d="M43.5 21 A14 14 0 1 0 43.5 35" fill="none" stroke="#f7f7f7" stroke-width="4.5"/>
    <path d="M23 19 L40 37 M37 19 L23 37" stroke="#d4d4d4" stroke-width="3.5"/>
    <path d="M25 34.5 Q34 20 50 16.5 Q39 24 33 35 Z" fill="#f1b531"/>
    <g fill="none" stroke="#fbfbfb" stroke-width="2" stroke-linecap="square">
      <path transform="translate(56,17) scale(0.9,0.95)" d="M4 0 L0 6 M4 0 L9 5 M2 7 H8 V12 H6 M2 7 V16 H10 V14 M12 4 V12 M16 0 V17 L14 17"/>
      <path transform="translate(73.5,17) scale(1,0.95)" d="M4 0 V2 M0.5 3 H8 M2 4 L3 7 M6.5 4 L5.5 7 M0 7.5 H8.5 M0 10 H8.5 M4.2 7.5 V18 M4 11 L0.5 15 M4.5 11 L8 14 M16 1 Q13 2.5 11 3 V9 Q11 14 9 17 M11 8 H17.5 M14.5 8 V18"/>
      <path transform="translate(98,17) scale(1.1,0.95)" d="M0.5 1 H18 M0 17 H18.5 M6 1 L4 9 H14 L13 17 M3.5 5 H12"/>
      <path transform="translate(120,17) scale(1.03,0.95)" d="M0 1 H8 M2 1 V15 M6 1 V18 M2 5.5 H6 M2 10 H6 M0 15 L8 13 M11 0 L12.5 3 M17 0 L15.5 3 M10 4.5 H18 M9.5 9.5 H18.5 M14 4.5 V10 Q13 15 9.5 18 M14.5 11 L18.5 18"/>
    </g>
    </g>
    <rect x="56" y="37" width="84" height="3" fill="#e8e8e8" opacity="0.6"/>
    </svg>
<svg style="left:305px;top:195px" width="24" height="26">
    <path d="M9.4 15 V4.6 Q9.4 3.1 10.6 3.1 Q11.8 3.1 11.8 4.6 V8.6 Q13 7.9 14 8.7 Q15.2 8.1 16.2 9 Q17.6 8.6 18.6 9.6 Q19.8 9.6 19.8 11 V16.5 Q19.6 21 16.2 23.3 H11.2 L5.4 17 Q4.2 15.4 5.6 14.8 Q7.4 14.2 9.4 15.8 Z" fill="#fff" stroke="#3a3a3a" stroke-width="1.05" stroke-linejoin="round"/>
    <path d="M14 8.7 V12.3 M16.2 9 V12.3 M18.6 9.6 V12.3" stroke="#3a3a3a" stroke-width="0.9"/>
    </svg>
</body></html>
